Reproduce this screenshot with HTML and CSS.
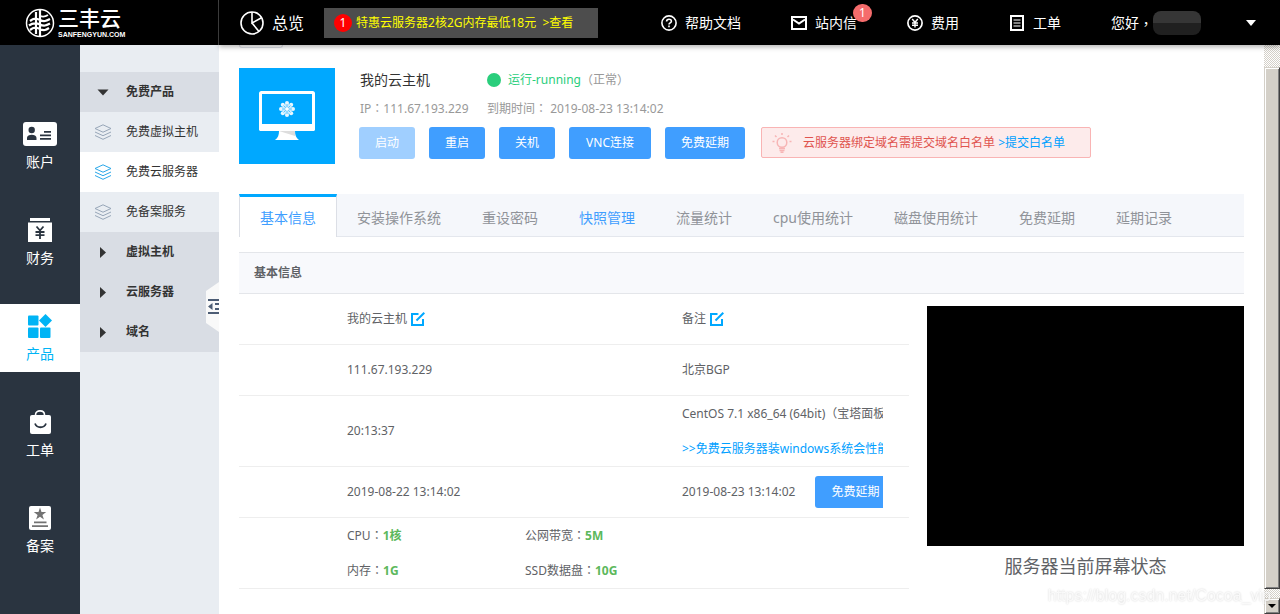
FILE: index.html
```
<!DOCTYPE html>
<html lang="zh-CN">
<head>
<meta charset="utf-8">
<title>三丰云</title>
<link rel="stylesheet" href="styles.css">
</head>
<body>
<svg class="defs" width="0" height="0" aria-hidden="true">
  <symbol id="layers" viewBox="0 0 18 16"><path fill="none" stroke="currentColor" d="M9 .8 17 4.500 9 8.200 1 4.500ZM1 8l8 3.700L17 8M1 11.500l8 3.800 8-3.800"/></symbol>
  <symbol id="edit" viewBox="0 0 14 14"><path fill="none" stroke="currentColor" stroke-width="2" d="M7.500 2H1v11h11V7"/><path stroke="currentColor" stroke-width="2" d="M5.500 8.500 13.300.8"/></symbol>
</svg>

<header class="topbar">
  <a class="brand" href="#">
    <svg width="30" height="30" viewBox="0 0 30 30" fill="none" stroke="#fff"><circle cx="15" cy="15" r="13.500" stroke-width="1.500"/><path stroke-width="2.200" d="M15 2v26M11 4v22M5 13c4-3 6-3 10-1s6 1 10-1M4 17.500c4-3 7-3 11-1s6 1 10-1M5 22c4-3 6-3 10-1s6 1 9-1"/><path stroke-width="1.800" d="M15 8c3 1 5 1 8-1"/></svg>
    <span class="brand-text"><span class="brand-name">三丰云</span><span class="brand-site">SANFENGYUN.COM</span></span>
  </a>
  <nav class="topnav">
    <a class="overview" href="#">
      <svg width="24" height="24" viewBox="0 0 24 24" fill="none" stroke="#fff" stroke-width="1.600"><circle cx="12" cy="12" r="11"/><path d="M12 1v11l10-5.500M12 12l7 8.500"/></svg>
      总览
    </a>
    <a class="promo" href="#"><span class="promo-count">1</span><span>特惠云服务器2核2G内存最低18元&nbsp; &gt;查看</span></a>
    <div class="tools">
      <a href="#"><svg width="16" height="16" viewBox="0 0 16 16" fill="none" stroke="#fff" stroke-width="1.600"><circle cx="8" cy="8" r="7.100"/><path d="M5.600 6.500C5.600 3.500 10.400 3.500 10.400 6.300 10.400 8 8 7.800 8 9.600M8 10.500v1.700"/></svg>帮助文档</a>
      <a class="mail" href="#"><svg width="16" height="16" viewBox="0 0 16 16" fill="none" stroke="#fff" stroke-width="2"><path d="M1 2h14v12H1ZM2 4.500l6 4 6-4"/></svg>站内信<span class="badge">1</span></a>
      <a href="#"><svg width="16" height="16" viewBox="0 0 16 16" fill="none" stroke="#fff" stroke-width="1.400"><circle cx="8" cy="8" r="7.100" stroke-width="1.700"/><path d="M5.200 4 8 7.300 10.800 4M8 7v5.500M5 8h6M5 10.200h6"/></svg>费用</a>
      <a href="#"><svg width="16" height="16" viewBox="0 0 16 16" fill="none" stroke="#fff"><path stroke-width="2" d="M2 1h12v14H2Z"/><path stroke="#aaa" stroke-width="1.600" d="M4.500 5h7M4.500 8h7M4.500 11h7"/></svg>工单</a>
      <span class="user">您好<span class="punct" lang="zh-TW">，</span><span class="user-mask"></span></span>
    </div>
    <button class="caret" aria-label="展开菜单"><svg width="10" height="6" viewBox="0 0 10 6"><path fill="#fff" d="M0 0h10L5 6Z"/></svg></button>
  </nav>
</header>

<div class="body">
  <nav class="rail">
    <a href="#"><svg width="34" height="24" viewBox="0 0 34 24"><rect width="34" height="24" rx="3" fill="#fff"/><g fill="#2a3440"><circle cx="8.700" cy="8" r="3.200"/><path d="M4 18v-2.200c0-4 9.500-4 9.500 0V18ZM21 9h7v1.800h-7ZM17 12.500h11v1.800H17ZM17 16h11v1.800H17Z"/></g></svg><span>账户</span></a>
    <a href="#"><svg width="24" height="24" viewBox="0 0 24 24"><path fill="#fff" d="M2 0h20v3H2ZM0 4.500h24V24H0Z"/><path fill="none" stroke="#2a3440" stroke-width="1.800" d="M8.500 8.500 12 12.500l3.500-4M12 12v9M7.500 14h9M7.500 17.200h9"/></svg><span>财务</span></a>
    <a class="active" href="#"><svg width="24" height="24" viewBox="0 0 24 24" fill="#00b4f5"><rect y="1.500" width="10.500" height="10" rx="1"/><rect y="13.500" width="10.500" height="10.500" rx="1"/><rect x="12" y="13.500" width="10.500" height="10.500" rx="1"/><path d="m17.500 0 6.500 6.500-6.500 6.500L11 6.500Z"/></svg><span>产品</span></a>
    <a href="#"><svg width="24" height="24" viewBox="0 0 24 24"><path fill="none" stroke="#fff" stroke-width="1.600" d="M7.500 6V5c0-5.500 9-5.500 9 0v1"/><rect x="2" y="5" width="21" height="19" rx="2" fill="#fff"/><path fill="none" stroke="#2a3440" stroke-width="1.800" d="M7 13.500c2 5 9 5 11 0"/></svg><span>工单</span></a>
    <a href="#"><svg width="24" height="24" viewBox="0 0 24 24"><rect x="1" width="22" height="24" rx="2" fill="#fff"/><path fill="#737373" d="m12 1.500 1.500 4.600h4.700l-3.800 2.800 1.500 4.600-3.900-2.800-3.900 2.800 1.500-4.600-3.800-2.800h4.700ZM6 15.500h12.500v1.800H6ZM4 19.200h16V21H4Z"/></svg><span>备案</span></a>
  </nav>

  <nav class="submenu">
    <a class="group" href="#"><svg width="18" height="16" viewBox="0 0 18 16"><path fill="#333" d="M3.500 5.500h11L9 11.500Z"/></svg>免费产品</a>
    <a href="#"><svg width="18" height="16"><use href="#layers"/></svg>免费虚拟主机</a>
    <a class="active" href="#"><svg width="18" height="16"><use href="#layers"/></svg>免费云服务器</a>
    <a href="#"><svg width="18" height="16"><use href="#layers"/></svg>免备案服务</a>
    <a class="group" href="#"><svg width="18" height="16" viewBox="0 0 18 16"><path fill="#333" d="M6 3v11l6-5.500Z"/></svg>虚拟主机</a>
    <a class="group" href="#"><svg width="18" height="16" viewBox="0 0 18 16"><path fill="#333" d="M6 3v11l6-5.500Z"/></svg>云服务器</a>
    <a class="group" href="#"><svg width="18" height="16" viewBox="0 0 18 16"><path fill="#333" d="M6 3v11l6-5.500Z"/></svg>域名</a>
    <button class="collapse" aria-label="收起菜单"><svg width="13" height="50" viewBox="0 0 13 50"><path fill="#f9f9f9" d="M13 0v50L0 41V9Z"/><path fill="#4c5c74" d="M2 17h11v2H2ZM2 30h11v2H2ZM2 24.500 6.500 21v7ZM9 21h4v2H9ZM9 26h4v2H9Z"/></svg></button>
  </nav>

  <main class="content">
    <div class="stub"></div>
    <section class="host">
      <div class="host-icon"><svg width="56" height="50" viewBox="0 0 56 50"><rect x="1.500" y="1.500" width="53" height="37" rx="1" fill="#00a8ff" stroke="#fff" stroke-width="3"/><path fill="#fff" d="M0 33h56v5.500L55 40H1l-1-1.500ZM20 40h16c0 4 1 7 4 9H16c3-2 4-5 4-9Z"/><path fill="#ddd" d="M20 40h16v5Z"/><g fill="#c4eaff"><circle cx="28" cy="18" r="5"/><g fill="#e8f7ff"><circle cx="28" cy="12" r="2"/><circle cx="28" cy="24" r="2"/><circle cx="22" cy="18" r="2"/><circle cx="34" cy="18" r="2"/><circle cx="23.800" cy="13.800" r="2"/><circle cx="32.200" cy="13.800" r="2"/><circle cx="23.800" cy="22.200" r="2"/><circle cx="32.200" cy="22.200" r="2"/></g><path stroke="#5cc6ff" d="M28 13v10M23 18h10M24.500 14.500l7 7M31.500 14.500l-7 7"/><circle cx="28" cy="18" r="1.800" fill="#fff"/></g></svg></div>
      <div class="host-info">
        <div class="host-line"><span class="host-name">我的云主机</span><span class="status"><i class="dot"></i><b>运行-running</b><span class="punct" lang="zh-TW">（</span>正常<span class="punct" lang="zh-TW">）</span></span></div>
        <div class="host-line meta"><span>IP<span class="punct" lang="zh-TW">：</span>111.67.193.229</span><span>到期时间<span class="punct" lang="zh-TW">：</span> 2019-08-23 13:14:02</span></div>
        <div class="actions">
          <button class="btn" disabled>启动</button>
          <button class="btn">重启</button>
          <button class="btn">关机</button>
          <button class="btn wide">VNC连接</button>
          <button class="btn">免费延期</button>
          <div class="alert"><svg width="20" height="20" viewBox="0 0 20 20" fill="none" stroke="#f7b5b5" stroke-width="1.500"><circle cx="10" cy="9.500" r="4.800"/><path d="M7 15.500h6M7.500 17.500h5M8.500 19.300h3M10 0v2M3 2.500 4.500 4M17 2.500 15.500 4M.500 8.500h2M17.500 8.500h2"/></svg><span>云服务器绑定域名需提交域名白名单 <a href="#">&gt;提交白名单</a></span></div>
        </div>
      </div>
    </section>

    <nav class="tabs">
      <a class="active" href="#">基本信息</a><a href="#">安装操作系统</a><a href="#">重设密码</a><a class="hot" href="#">快照管理</a><a href="#">流量统计</a><a href="#">cpu使用统计</a><a href="#">磁盘使用统计</a><a href="#">免费延期</a><a href="#">延期记录</a>
    </nav>

    <h2 class="section-title">基本信息</h2>
    <div class="detail">
      <div class="facts-wrap">
      <table class="facts">
        <colgroup><col class="gap-col"><col><col class="gap-col"><col></colgroup>
        <tr><td></td><td><div class="val">我的云主机<button class="edit" aria-label="修改名称"><svg width="14" height="14"><use href="#edit"/></svg></button></div></td><td></td><td><div class="val">备注<button class="edit" aria-label="修改备注"><svg width="14" height="14"><use href="#edit"/></svg></button></div></td></tr>
        <tr><td></td><td><div class="val">111.67.193.229</div></td><td></td><td><div class="val">北京BGP</div></td></tr>
        <tr class="tall"><td></td><td><div class="val">20:13:37</div></td><td></td><td><div class="val">CentOS 7.1 x86_64 (64bit)（宝塔面板）</div><div class="val"><a href="#">&gt;&gt;免费云服务器装windows系统会性能不足</a></div></td></tr>
        <tr><td></td><td><div class="val">2019-08-22 13:14:02</div></td><td></td><td><div class="val">2019-08-23 13:14:02<button class="btn renew">免费延期</button></div></td></tr>
        <tr class="tall"><td></td><td colspan="3"><div class="specs"><span>CPU<span class="punct" lang="zh-TW">：</span><b>1核</b></span><span>公网带宽<span class="punct" lang="zh-TW">：</span><b>5M</b></span><span>内存<span class="punct" lang="zh-TW">：</span><b>1G</b></span><span>SSD数据盘<span class="punct" lang="zh-TW">：</span><b>10G</b></span></div></td></tr>
      </table>
      </div>
      <figure class="screen"><div class="screen-view"></div><figcaption>服务器当前屏幕状态</figcaption></figure>
    </div>
  </main>

  <div class="scroll" aria-hidden="true"><div class="thumb"></div><div class="arrow"><svg width="8" height="4" viewBox="0 0 8 4"><path d="M0 0h8L4 4Z"/></svg></div></div>
</div>
<div class="watermark">https://blog.csdn.net/Cocoa_vip</div>
</body>
</html>
```
FILE: styles.css
```
* { box-sizing: border-box; }
body {
  margin: 0;
  height: 100vh;
  display: flex;
  flex-direction: column;
  overflow: hidden;
  background: #fff;
  color: #606266;
  font: 12px/20px "Noto Sans", "Noto Sans CJK SC", sans-serif;
}
a { color: inherit; text-decoration: none; }
button { font: inherit; border: 0; padding: 0; background: none; cursor: pointer; }
svg { display: block; flex: none; }
.defs { position: absolute; }
.punct { font-family: "Noto Sans CJK TC", sans-serif; line-height: 1; }

/* top bar */
.topbar {
  position: relative;
  z-index: 2;
  display: flex;
  flex: none;
  height: 45px;
  background: #000;
  color: #fff;
  font-size: 14px;
}
.brand {
  display: flex;
  align-items: center;
  gap: 3px;
  width: 219px;
  padding-left: 25px;
  border-right: 1px solid #444;
}
.brand-text { display: flex; flex-direction: column; }
.brand-name {
  font: 500 21px/24px "Liberation Sans", "Noto Sans CJK SC", sans-serif;
}
.brand-site { font: bold 7px/8px "Liberation Sans", sans-serif; }
.topnav {
  display: flex;
  align-items: center;
  flex: 1;
  padding: 0 24px 0 21px;
  white-space: nowrap;
  box-shadow: 0 2px 5px rgba(0, 0, 0, .3);
}
.overview { display: flex; align-items: center; gap: 8px; font-size: 16px; }
.promo {
  display: flex;
  align-items: center;
  gap: 4px;
  width: 274px;
  height: 30px;
  margin-left: 20px;
  padding-left: 10px;
  background: #4d4d4d;
  color: #ff0;
  font-size: 12px;
}
.promo-count {
  width: 18px;
  line-height: 18px;
  border-radius: 50%;
  background: #f00;
  color: #fff;
  text-align: center;
}
.tools { display: flex; align-items: center; gap: 50px; margin-left: 63px; }
.tools a { position: relative; display: flex; align-items: center; gap: 8px; }
.badge {
  position: absolute;
  top: -9px;
  right: -15px;
  width: 19px;
  border-radius: 9px;
  background: #f56c6c;
  font-size: 12px;
  line-height: 18px;
  text-align: center;
}
.user { display: flex; align-items: center; }
.user-mask {
  width: 48px;
  height: 24px;
  border-radius: 8px;
  background: linear-gradient(#363636 50%, #202020 50%);
}
.caret { margin-left: auto; }

.body { display: flex; flex: 1; min-height: 0; }

/* icon rail */
.rail {
  display: flex;
  flex: none;
  flex-direction: column;
  gap: 28px;
  width: 80px;
  padding-top: 67px;
  background: #2a3440;
  color: #fff;
  font-size: 14px;
}
.rail a {
  display: flex;
  flex-direction: column;
  align-items: center;
  gap: 6px;
  height: 68px;
  padding-top: 10px;
}
.rail .active { background: #fff; color: #00b4f5; }

/* second level menu */
.submenu {
  position: relative;
  flex: none;
  width: 139px;
  padding-top: 27px;
  background: #e9edf2;
  color: #333;
}
.submenu a {
  display: flex;
  align-items: center;
  gap: 14px;
  height: 40px;
  padding-left: 14px;
}
.submenu svg { color: #97a6b8; }
.submenu .active { background: #fff; }
.submenu .active svg { color: #2aa7e8; }
.submenu .group { background: #d9dde4; font-weight: bold; }
.collapse { position: absolute; right: 0; top: 237px; }

/* content */
.content { flex: 1; min-width: 0; padding: 0 20px; }
.stub {
  width: 44px;
  height: 3px;
  border: 1px solid #dcdfe6;
  border-top: 0;
  border-radius: 0 0 4px 4px;
}
.host { display: flex; gap: 24px; margin-top: 20px; }
.host-icon {
  display: flex;
  align-items: center;
  justify-content: center;
  flex: none;
  width: 96px;
  height: 96px;
  background: #00a8ff;
}
.host-info { flex: 1; white-space: nowrap; }
.host-line {
  display: grid;
  grid-template-columns: 127px 1fr;
  height: 24px;
  padding-left: 1px;
  line-height: 24px;
}
.host-name { color: #333; font-size: 14px; }
.status { display: flex; align-items: center; color: #999; }
.status b { color: #2ace7c; font-weight: normal; }
.dot {
  width: 14px;
  height: 14px;
  margin-right: 7px;
  border-radius: 50%;
  background: #2ace7c;
}
.meta { margin: 5px 0 6px; color: #999; }
.actions { display: flex; gap: 14px; align-items: flex-start; }
.btn {
  height: 32px;
  padding: 0 16px;
  border-radius: 3px;
  background: #409eff;
  color: #fff;
}
.btn:disabled { background: #a0cfff; }
.wide { width: 82px; }
.alert {
  display: flex;
  align-items: center;
  gap: 11px;
  width: 330px;
  height: 31px;
  margin-left: 2px;
  padding-left: 10px;
  border: 1px solid #f9b4b4;
  border-radius: 2px;
  background: #fdebeb;
  color: #e0544f;
}
.alert a, .val a { color: #00a0ff; }

.tabs {
  display: flex;
  height: 43px;
  margin-top: 30px;
  border-bottom: 1px solid #e4e7ed;
  background: #f5f7fb;
  color: #909399;
  font-size: 14px;
  line-height: 42px;
  white-space: nowrap;
}
.tabs a {
  height: 43px;
  margin-left: -1px;
  padding: 3px 20px 0;
  border: 1px solid transparent;
  border-width: 0 1px;
}
.tabs .active {
  margin-left: 0;
  padding-top: 0;
  border-color: #dcdfe6;
  border-top: 3px solid #00a8ff;
  background: #fff;
  color: #409eff;
}
.tabs .hot { color: #409eff; }

.section-title {
  margin: 15px 0 0;
  padding-left: 15px;
  border: 1px solid #e4e6ea;
  border-width: 1px 0;
  background: #f8f9fc;
  font-size: 12px;
  line-height: 40px;
}
.detail { display: flex; gap: 18px; }
.facts-wrap { flex: 1; min-width: 0; }
.facts {
  width: 100%;
  table-layout: fixed;
  border-collapse: separate;
  border-spacing: 0;
}
.gap-col { width: 108px; }
.facts td { height: 51px; padding: 0 26px 0 0; border-bottom: 1px solid #eee; }
.facts .tall td { height: 71px; }
.val {
  display: flex;
  align-items: center;
  height: 35px;
  overflow: hidden;
  white-space: nowrap;
}
.edit { margin-left: 4px; color: #00a8ff; }
.renew { flex: none; margin-left: 20px; }
.specs { display: grid; grid-template-columns: 178px 1fr; line-height: 35px; }
.specs b { color: #5cb85c; }
.screen { flex: none; width: 317px; margin: 12px 0 0; }
.screen-view { height: 240px; background: #000; }
.screen figcaption { font-size: 18px; line-height: 40px; text-align: center; }

/* scroll bar */
.scroll {
  display: flex;
  flex: none;
  flex-direction: column;
  width: 16px;
  padding-top: 22px;
  background: repeating-conic-gradient(#d4d0c8 0 25%, #fff 0 50%) 0 0 / 2px 2px;
}
.thumb, .arrow {
  border: 1px solid;
  border-color: #d4d0c8 #404040 #404040 #d4d0c8;
  background: #d4d0c8;
  box-shadow: inset 1px 1px #fff, inset -1px -1px #808080;
}
.thumb { flex: 1; }
.arrow {
  display: flex;
  align-items: center;
  justify-content: center;
  height: 16px;
  margin-top: 9px;
}
.watermark {
  position: fixed;
  right: 9px;
  bottom: 8px;
  color: rgba(255, 255, 255, .8);
  font: 16px/20px "Liberation Sans", sans-serif;
  text-shadow: 0 0 2px rgba(0, 0, 0, .2);
}
```
